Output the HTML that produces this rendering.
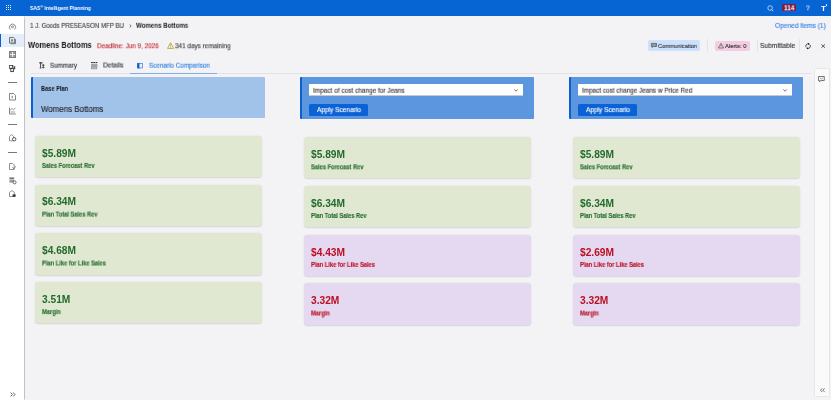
<!DOCTYPE html>
<html><head><meta charset="utf-8"><style>
html,body{margin:0;padding:0;width:831px;height:400px;overflow:hidden;background:#f3f3f6;font-family:"Liberation Sans",sans-serif;}
.r{position:absolute;}
.t{position:absolute;white-space:nowrap;line-height:1;transform-origin:0 0;}
</style></head><body>
<div class="r" style="left:0px;top:0px;width:831px;height:16px;background:#0764d3"></div>
<div class="r" style="left:5.6px;top:4.6px;width:1.2999999999999998px;height:1.2999999999999998px;background:#fff;border-radius:0.3px"></div>
<div class="r" style="left:5.6px;top:6.8999999999999995px;width:1.2999999999999998px;height:1.2999999999999998px;background:#fff;border-radius:0.3px"></div>
<div class="r" style="left:5.6px;top:9.2px;width:1.2999999999999998px;height:1.3000000000000007px;background:#fff;border-radius:0.3px"></div>
<div class="r" style="left:7.8999999999999995px;top:4.6px;width:1.2999999999999998px;height:1.2999999999999998px;background:#fff;border-radius:0.3px"></div>
<div class="r" style="left:7.8999999999999995px;top:6.8999999999999995px;width:1.2999999999999998px;height:1.2999999999999998px;background:#fff;border-radius:0.3px"></div>
<div class="r" style="left:7.8999999999999995px;top:9.2px;width:1.2999999999999998px;height:1.3000000000000007px;background:#fff;border-radius:0.3px"></div>
<div class="r" style="left:10.2px;top:4.6px;width:1.3000000000000007px;height:1.2999999999999998px;background:#fff;border-radius:0.3px"></div>
<div class="r" style="left:10.2px;top:6.8999999999999995px;width:1.3000000000000007px;height:1.2999999999999998px;background:#fff;border-radius:0.3px"></div>
<div class="r" style="left:10.2px;top:9.2px;width:1.3000000000000007px;height:1.3000000000000007px;background:#fff;border-radius:0.3px"></div>
<div class="t" style="left:29.90px;top:6px;font-size:5.94px;color:#fff;font-weight:700;transform:translateY(0.00px) scaleX(0.850);will-change:transform;">SAS<span style="font-size:0.7em;position:relative;top:-0.4em">®</span> Intelligent Planning</div>
<svg class="r" style="left:766.6px;top:4.9px;overflow:visible" width="8" height="8" viewBox="0 0 8 8"><circle cx="3.1" cy="3.0" r="2.3" fill="none" stroke="#e8efff" stroke-width="0.7"/><path d="M4.8 4.7L6.3 6.2" stroke="#e8efff" stroke-width="0.8"/></svg>
<div class="r" style="left:782px;top:4.3px;width:14px;height:7.2px;background:#7e1c46;border-radius:1px"></div>
<div class="t" style="left:783.80px;top:5px;font-size:6.67px;color:#fff;font-weight:700;transform:translateY(0.30px) scaleX(0.967);will-change:transform;">114</div>
<div class="t" style="left:806.00px;top:5px;font-size:6.96px;color:#dde6fa;font-weight:400;transform:translateY(0.40px) scaleX(0.931);will-change:transform;-webkit-text-stroke:0.14px currentColor;">?</div>
<div class="t" style="left:821.00px;top:4px;font-size:7.25px;color:#fff;font-weight:700;transform:translateY(0.60px) scaleX(1.129);will-change:transform;">T</div>
<div class="r" style="left:826.2px;top:4.3px;width:1.2999999999999545px;height:1.2999999999999998px;background:#fff;border-radius:50%"></div>
<div class="r" style="left:0px;top:16px;width:24px;height:384px;background:#fff;box-shadow:0.5px 0 1px rgba(0,0,0,0.2)"></div>
<div class="r" style="left:0px;top:34px;width:24px;height:12.799999999999997px;background:#e3edfb"></div>
<div class="r" style="left:0px;top:34px;width:1.3px;height:12.799999999999997px;background:#0b5fce"></div>
<svg class="r" style="left:9px;top:23px;overflow:visible" width="7" height="7" viewBox="0 0 7 7"><path d="M1.4 6.5A3.1 3.1 0 1 1 5.6 6.5" fill="none" stroke="#666" stroke-width="0.75"/><circle cx="3.5" cy="3.8" r="1" fill="none" stroke="#666" stroke-width="0.75"/></svg>
<svg class="r" style="left:9px;top:36.8px;overflow:visible" width="7" height="7.2" viewBox="0 0 7 7.2"><path d="M0.5 0.5H4.6L5.7 1.6V6H0.5Z" fill="none" stroke="#666" stroke-width="0.9"/><path d="M1.5 6.7H6.5V2.2" fill="none" stroke="#666" stroke-width="0.8"/><rect x="1.9" y="2.2" width="2.2" height="2.4" fill="#888"/></svg>
<svg class="r" style="left:9px;top:50.5px;overflow:visible" width="7" height="7" viewBox="0 0 7 7"><rect x="0.4" y="0.4" width="6.2" height="6.2" fill="none" stroke="#666" stroke-width="0.8"/><rect x="1" y="1" width="2" height="2" fill="#999"/><rect x="4" y="1" width="2" height="2" fill="#999"/><rect x="1" y="4" width="2" height="2" fill="#999"/><rect x="4" y="4" width="2" height="2" fill="#999"/><path d="M3.5 1V6M1 3.5H6" stroke="#eee" stroke-width="1"/></svg>
<svg class="r" style="left:9px;top:64.5px;overflow:visible" width="7" height="7" viewBox="0 0 7 7"><rect x="0.5" y="0.5" width="3.3" height="3" fill="none" stroke="#444" stroke-width="0.8"/><rect x="1.8" y="3.2" width="2.6" height="3.4" fill="none" stroke="#333" stroke-width="0.9"/><path d="M5.7 1.2V4.3" stroke="#222" stroke-width="1"/><path d="M3.8 0.6V2" stroke="#222" stroke-width="0.9"/></svg>
<div class="r" style="left:8px;top:82px;width:9px;height:1px;background:#777"></div>
<svg class="r" style="left:9px;top:92.5px;overflow:visible" width="7" height="7.5" viewBox="0 0 7 7.5"><path d="M0.5 0.5H4.6L6.5 2.4V7H0.5Z" fill="none" stroke="#777" stroke-width="0.9"/><rect x="2.6" y="2.8" width="1.4" height="2.5" fill="#999"/></svg>
<svg class="r" style="left:9px;top:106.5px;overflow:visible" width="7" height="7.5" viewBox="0 0 7 7.5"><path d="M0.5 0.5V7H6.8" fill="none" stroke="#777" stroke-width="0.9"/><path d="M1.2 3L3 1.6L4.6 2.6L6.5 1" fill="none" stroke="#777" stroke-width="0.8"/><rect x="1.5" y="4" width="4.6" height="2.2" fill="#ccc"/></svg>
<div class="r" style="left:8px;top:124px;width:9px;height:1px;background:#777"></div>
<svg class="r" style="left:9px;top:134px;overflow:visible" width="7.5" height="7.5" viewBox="0 0 7.5 7.5"><path d="M0.5 2.4L2.6 0.5L4.6 2.4V6.8H0.5Z" fill="none" stroke="#777" stroke-width="0.8"/><circle cx="5.2" cy="5.2" r="1.7" fill="#fff" stroke="#444" stroke-width="0.9"/></svg>
<div class="r" style="left:8px;top:152px;width:9px;height:1px;background:#777"></div>
<svg class="r" style="left:9px;top:162.5px;overflow:visible" width="7.5" height="7" viewBox="0 0 7.5 7"><path d="M0.5 0.5H3.8L5.2 1.9V6.5H0.5Z" fill="none" stroke="#777" stroke-width="0.8"/><path d="M3.4 4.2L4.8 5.8L6.6 3.4" fill="none" stroke="#666" stroke-width="0.8"/></svg>
<svg class="r" style="left:9px;top:176.5px;overflow:visible" width="7.5" height="7" viewBox="0 0 7.5 7"><rect x="0.4" y="0.4" width="4.8" height="2" fill="#777"/><rect x="0.4" y="3" width="4.8" height="2.6" fill="#999"/><circle cx="5.6" cy="5.4" r="1.5" fill="#fff" stroke="#444" stroke-width="0.8"/></svg>
<svg class="r" style="left:9px;top:190px;overflow:visible" width="7.5" height="7" viewBox="0 0 7.5 7"><path d="M0.5 2.4L3 0.5L5.4 2.4V6.5H0.5Z" fill="none" stroke="#777" stroke-width="0.8"/><rect x="3.6" y="4.4" width="3" height="2.4" fill="#333"/></svg>
<svg class="r" style="left:9.5px;top:391.5px;overflow:visible" width="6" height="5" viewBox="0 0 6 5"><path d="M0.6 0.6L2.4 2.5L0.6 4.4M3.2 0.6L5 2.5L3.2 4.4" fill="none" stroke="#555" stroke-width="0.9"/></svg>
<div class="t" style="left:29.80px;top:22px;font-size:7.10px;color:#45454c;font-weight:400;transform:translateY(0.90px) scaleX(0.861);will-change:transform;-webkit-text-stroke:0.14px currentColor;">1 J. Goods PRESEASON MFP BU</div>
<svg class="r" style="left:129.3px;top:24.3px;overflow:visible" width="3" height="4" viewBox="0 0 3 4"><path d="M0.6 0.5L2.2 1.9L0.6 3.3" fill="none" stroke="#555" stroke-width="0.8"/></svg>
<div class="t" style="left:135.90px;top:22px;font-size:6.96px;color:#18181f;font-weight:700;transform:translateY(0.80px) scaleX(0.886);will-change:transform;">Womens Bottoms</div>
<div class="t" style="left:775.00px;top:22px;font-size:6.96px;color:#3583e3;font-weight:400;transform:translateY(0.90px) scaleX(0.945);will-change:transform;-webkit-text-stroke:0.14px currentColor;">Opened items (1)</div>
<div class="t" style="left:28.20px;top:40px;font-size:8.70px;color:#15151c;font-weight:700;transform:translateY(0.90px) scaleX(0.865);will-change:transform;">Womens Bottoms</div>
<div class="t" style="left:96.90px;top:42px;font-size:7.25px;color:#c42a32;font-weight:400;transform:translateY(0.20px) scaleX(0.875);will-change:transform;-webkit-text-stroke:0.14px currentColor;">Deadline: Jun 9, 2026</div>
<svg class="r" style="left:166.8px;top:42px;overflow:visible" width="7.2" height="7" viewBox="0 0 7.2 7"><path d="M3.6 0.6L6.7 6.4H0.5Z" fill="none" stroke="#b9a637" stroke-width="0.9" stroke-linejoin="round"/><path d="M3.6 2.4V4.6" stroke="#b9a637" stroke-width="0.8"/><circle cx="3.6" cy="5.5" r="0.45" fill="#b9a637"/></svg>
<div class="t" style="left:175.20px;top:42px;font-size:7.25px;color:#3a3a40;font-weight:400;transform:translateY(0.20px) scaleX(0.879);will-change:transform;-webkit-text-stroke:0.14px currentColor;">341 days remaining</div>
<div class="r" style="left:647.8px;top:40.4px;width:52.700000000000045px;height:10.200000000000003px;background:#cce1fb;border-radius:2px"></div>
<svg class="r" style="left:650.8px;top:43px;overflow:visible" width="6" height="4.9" viewBox="0 0 6 4.9"><path d="M0.4 0.4H5.6V3.5H2.4L1.3 4.6V3.5H0.4Z" fill="#888" stroke="#555" stroke-width="0.7" stroke-linejoin="round"/><path d="M1.5 1.6L3 2.5L4.5 1.6" fill="none" stroke="#ddd" stroke-width="0.5"/></svg>
<div class="t" style="left:658.00px;top:43px;font-size:5.80px;color:#33333a;font-weight:400;transform:translateY(0.90px) scaleX(0.968);will-change:transform;-webkit-text-stroke:0.14px currentColor;">Communication</div>
<div class="r" style="left:707px;top:39px;width:0.6000000000000227px;height:13px;background:#e3e3e7"></div>
<div class="r" style="left:715.1px;top:40.5px;width:34.89999999999998px;height:10.200000000000003px;background:#f5cde2;border-radius:2px"></div>
<svg class="r" style="left:718px;top:42.5px;overflow:visible" width="6" height="5.5" viewBox="0 0 6 5.5"><path d="M3 0.4L5.6 5H0.4Z" fill="none" stroke="#555" stroke-width="0.7"/><path d="M3 1.8V3.5" stroke="#555" stroke-width="0.6"/></svg>
<div class="t" style="left:725.30px;top:43px;font-size:5.80px;color:#33333a;font-weight:400;transform:translateY(0.90px) scaleX(1.006);will-change:transform;-webkit-text-stroke:0.14px currentColor;">Alerts: 0</div>
<div class="r" style="left:756.6px;top:39px;width:0.6000000000000227px;height:13px;background:#e3e3e7"></div>
<div class="t" style="left:759.50px;top:42px;font-size:7.10px;color:#33333a;font-weight:400;transform:translateY(0.90px) scaleX(0.939);will-change:transform;-webkit-text-stroke:0.14px currentColor;">Submittable</div>
<div class="r" style="left:799.2px;top:39px;width:0.599999999999909px;height:13px;background:#e3e3e7"></div>
<svg class="r" style="left:804.8px;top:42.5px;overflow:visible" width="6.2" height="6.2" viewBox="0 0 6.2 6.2"><path d="M1.11 4.25A2.3 2.3 0 0 1 3.7 0.88" fill="none" stroke="#333" stroke-width="0.85"/><path d="M5.09 1.95A2.3 2.3 0 0 1 2.5 5.32" fill="none" stroke="#333" stroke-width="0.85"/><circle cx="3.7" cy="0.9" r="0.85" fill="#222"/><circle cx="2.5" cy="5.3" r="0.85" fill="#222"/></svg>
<svg class="r" style="left:820.6px;top:44.3px;overflow:visible" width="4.4" height="4.2" viewBox="0 0 4.4 4.2"><path d="M0.4 0.4L4 3.8M4 0.4L0.4 3.8" stroke="#333" stroke-width="0.8"/></svg>
<div class="r" style="left:31px;top:73px;width:780px;height:0.7000000000000028px;background:#e2e2e6"></div>
<svg class="r" style="left:39px;top:62.2px;overflow:visible" width="5.6" height="6.6" viewBox="0 0 5.6 6.6"><path d="M0.2 0.9H3.6" stroke="#222" stroke-width="1"/><path d="M1.6 0.4V6.2" stroke="#333" stroke-width="0.9"/><path d="M0.6 6H2.4" stroke="#444" stroke-width="0.7"/><path d="M4.3 2V6.4M3.1 3.2H5.5M3.1 5.4H5.5" stroke="#333" stroke-width="0.8"/></svg>
<div class="t" style="left:50.00px;top:62px;font-size:6.81px;color:#33333a;font-weight:400;transform:translateY(0.70px) scaleX(0.927);will-change:transform;-webkit-text-stroke:0.14px currentColor;">Summary</div>
<svg class="r" style="left:90.9px;top:61.7px;overflow:visible" width="6.4" height="7.3" viewBox="0 0 6.4 7.3"><path d="M0 0.5H6.4" stroke="#333" stroke-width="1" stroke-dasharray="1.8 0.5"/><rect x="0" y="1.6" width="6.4" height="4.4" fill="#b4b4b8"/><path d="M0 2.9H6.4M0 4.6H6.4" stroke="#888" stroke-width="0.6"/><path d="M0 6.7H6.4" stroke="#666" stroke-width="0.9" stroke-dasharray="1.6 0.6"/></svg>
<div class="t" style="left:102.70px;top:62px;font-size:6.96px;color:#33333a;font-weight:400;transform:translateY(0.50px) scaleX(0.964);will-change:transform;-webkit-text-stroke:0.14px currentColor;">Details</div>
<svg class="r" style="left:137px;top:62.5px;overflow:visible" width="5.8" height="5.4" viewBox="0 0 5.8 5.4"><rect x="0.4" y="0.4" width="5" height="4.6" fill="none" stroke="#4a8ae0" stroke-width="0.8"/><rect x="0.2" y="0.2" width="2" height="5" fill="#0b5fce"/><path d="M2.6 -0.4V5.8" stroke="#3b7fdc" stroke-width="0.5"/></svg>
<div class="t" style="left:149.00px;top:62px;font-size:6.81px;color:#2f7fe0;font-weight:400;transform:translateY(0.70px) scaleX(0.931);will-change:transform;-webkit-text-stroke:0.14px currentColor;">Scenario Comparison</div>
<div class="r" style="left:130px;top:72.5px;width:87px;height:1.5px;background:#7fb0ec"></div>
<div class="r" style="left:815.2px;top:68.5px;width:14.199999999999932px;height:327.8px;background:#fafafb;box-shadow:0 0 1.2px rgba(0,0,0,0.22)"></div>
<svg class="r" style="left:818.2px;top:76.2px;overflow:visible" width="6.8" height="6.5" viewBox="0 0 6.8 6.5"><path d="M0.5 0.5H6.3V4.5H2.6L1.4 6V4.5H0.5Z" fill="none" stroke="#555" stroke-width="0.8"/><path d="M1.6 1.8L3.3 3.1L5.2 1.8" fill="none" stroke="#777" stroke-width="0.6"/></svg>
<svg class="r" style="left:819.7px;top:388px;overflow:visible" width="5" height="4.4" viewBox="0 0 5 4.4"><path d="M2.2 0.3L0.5 2.2L2.2 4.1M4.6 0.3L2.9 2.2L4.6 4.1" fill="none" stroke="#555" stroke-width="0.8"/></svg>
<div class="r" style="left:31px;top:77.4px;width:234px;height:40.599999999999994px;background:#a2c3e9;border-left:2.4px solid #0b5fce;box-sizing:border-box;border-radius:1px"></div>
<div class="t" style="left:40.80px;top:85px;font-size:6.81px;color:#111118;font-weight:700;transform:translateY(0.90px) scaleX(0.832);will-change:transform;">Base Plan</div>
<div class="t" style="left:40.80px;top:105px;font-size:8.70px;color:#26262c;font-weight:400;transform:translateY(0.00px) scaleX(0.911);will-change:transform;-webkit-text-stroke:0.14px currentColor;">Womens Bottoms</div>
<div class="r" style="left:300px;top:77.4px;width:234px;height:41.3px;background:#5b96de;border-left:2.4px solid #0b5fce;box-sizing:border-box;border-radius:1px"></div>
<div class="r" style="left:309px;top:84.4px;width:214px;height:11.799999999999997px;background:#fff;border-bottom:0.6px solid #c8c8cc;box-sizing:border-box"></div>
<svg class="r" style="left:514px;top:89px;overflow:visible" width="4.2" height="2.8" viewBox="0 0 4.2 2.8"><path d="M0.4 0.4L2.1 2.3L3.8 0.4" fill="none" stroke="#666" stroke-width="0.9"/></svg>
<div class="r" style="left:309.4px;top:103.8px;width:58.60000000000002px;height:11.799999999999997px;background:#0b62d6;border-radius:1.5px"></div>
<div class="t" style="left:317.00px;top:107px;font-size:6.81px;color:#fff;font-weight:400;transform:translateY(0.10px) scaleX(0.960);will-change:transform;-webkit-text-stroke:0.14px currentColor;">Apply Scenario</div>
<div class="r" style="left:569px;top:77.4px;width:234px;height:41.3px;background:#5b96de;border-left:2.4px solid #0b5fce;box-sizing:border-box;border-radius:1px"></div>
<div class="r" style="left:578px;top:84.4px;width:214px;height:11.799999999999997px;background:#fff;border-bottom:0.6px solid #c8c8cc;box-sizing:border-box"></div>
<svg class="r" style="left:783px;top:89px;overflow:visible" width="4.2" height="2.8" viewBox="0 0 4.2 2.8"><path d="M0.4 0.4L2.1 2.3L3.8 0.4" fill="none" stroke="#666" stroke-width="0.9"/></svg>
<div class="r" style="left:578.4px;top:103.8px;width:58.60000000000002px;height:11.799999999999997px;background:#0b62d6;border-radius:1.5px"></div>
<div class="t" style="left:586.00px;top:107px;font-size:6.81px;color:#fff;font-weight:400;transform:translateY(0.10px) scaleX(0.960);will-change:transform;-webkit-text-stroke:0.14px currentColor;">Apply Scenario</div>
<div class="t" style="left:313.00px;top:87px;font-size:7.10px;color:#38383e;font-weight:400;transform:translateY(0.80px) scaleX(0.911);will-change:transform;-webkit-text-stroke:0.14px currentColor;">Impact of cost change for Jeans</div>
<div class="t" style="left:581.70px;top:87px;font-size:7.10px;color:#38383e;font-weight:400;transform:translateY(0.70px) scaleX(0.899);will-change:transform;-webkit-text-stroke:0.14px currentColor;">Impact cost change Jeans w Price Red</div>
<div class="r" style="left:35.2px;top:135.8px;width:226.5px;height:41.30000000000001px;background:#e0e8d2;border-radius:3.5px;box-shadow:0 0.6px 1.6px rgba(0,0,0,0.13)"></div>
<div class="t" style="left:42.10px;top:148px;font-size:10.20px;color:#236b2c;font-weight:700;transform:translateY(0.70px) scaleX(1.000);will-change:transform;">$5.89M</div>
<div class="t" style="left:42.10px;top:162px;font-size:6.30px;color:#236b2c;font-weight:700;transform:translateY(0.90px) scaleX(0.910);will-change:transform;-webkit-text-stroke:0.12px currentColor;">Sales Forecast Rev</div>
<div class="r" style="left:35.2px;top:184.5px;width:226.5px;height:41.30000000000001px;background:#e0e8d2;border-radius:3.5px;box-shadow:0 0.6px 1.6px rgba(0,0,0,0.13)"></div>
<div class="t" style="left:42.10px;top:197px;font-size:10.20px;color:#236b2c;font-weight:700;transform:translateY(0.40px) scaleX(1.000);will-change:transform;">$6.34M</div>
<div class="t" style="left:42.10px;top:211px;font-size:6.30px;color:#236b2c;font-weight:700;transform:translateY(0.60px) scaleX(0.910);will-change:transform;-webkit-text-stroke:0.12px currentColor;">Plan Total Sales Rev</div>
<div class="r" style="left:35.2px;top:233.4px;width:226.5px;height:41.29999999999998px;background:#e0e8d2;border-radius:3.5px;box-shadow:0 0.6px 1.6px rgba(0,0,0,0.13)"></div>
<div class="t" style="left:42.10px;top:246px;font-size:10.20px;color:#236b2c;font-weight:700;transform:translateY(0.30px) scaleX(1.000);will-change:transform;">$4.68M</div>
<div class="t" style="left:42.10px;top:260px;font-size:6.30px;color:#236b2c;font-weight:700;transform:translateY(0.50px) scaleX(0.910);will-change:transform;-webkit-text-stroke:0.12px currentColor;">Plan Like for Like Sales</div>
<div class="r" style="left:35.2px;top:282.0px;width:226.5px;height:41.30000000000001px;background:#e0e8d2;border-radius:3.5px;box-shadow:0 0.6px 1.6px rgba(0,0,0,0.13)"></div>
<div class="t" style="left:42.10px;top:294px;font-size:10.20px;color:#236b2c;font-weight:700;transform:translateY(0.90px) scaleX(1.000);will-change:transform;">3.51M</div>
<div class="t" style="left:42.10px;top:309px;font-size:6.30px;color:#236b2c;font-weight:700;transform:translateY(0.10px) scaleX(0.910);will-change:transform;-webkit-text-stroke:0.12px currentColor;">Margin</div>
<div class="r" style="left:304.3px;top:137.20000000000002px;width:226.49999999999994px;height:41.29999999999998px;background:#e0e8d2;border-radius:3.5px;box-shadow:0 0.6px 1.6px rgba(0,0,0,0.13)"></div>
<div class="t" style="left:311.20px;top:150px;font-size:10.20px;color:#236b2c;font-weight:700;transform:translateY(0.10px) scaleX(1.000);will-change:transform;">$5.89M</div>
<div class="t" style="left:311.20px;top:164px;font-size:6.30px;color:#236b2c;font-weight:700;transform:translateY(0.30px) scaleX(0.910);will-change:transform;-webkit-text-stroke:0.12px currentColor;">Sales Forecast Rev</div>
<div class="r" style="left:304.3px;top:185.9px;width:226.49999999999994px;height:41.29999999999998px;background:#e0e8d2;border-radius:3.5px;box-shadow:0 0.6px 1.6px rgba(0,0,0,0.13)"></div>
<div class="t" style="left:311.20px;top:198px;font-size:10.20px;color:#236b2c;font-weight:700;transform:translateY(0.80px) scaleX(1.000);will-change:transform;">$6.34M</div>
<div class="t" style="left:311.20px;top:213px;font-size:6.30px;color:#236b2c;font-weight:700;transform:translateY(0.00px) scaleX(0.910);will-change:transform;-webkit-text-stroke:0.12px currentColor;">Plan Total Sales Rev</div>
<div class="r" style="left:304.3px;top:234.8px;width:226.49999999999994px;height:41.30000000000001px;background:#e4d9f1;border-radius:3.5px;box-shadow:0 0.6px 1.6px rgba(0,0,0,0.13)"></div>
<div class="t" style="left:311.20px;top:247px;font-size:10.20px;color:#bb0f22;font-weight:700;transform:translateY(0.70px) scaleX(1.000);will-change:transform;">$4.43M</div>
<div class="t" style="left:311.20px;top:261px;font-size:6.30px;color:#bb0f22;font-weight:700;transform:translateY(0.90px) scaleX(0.910);will-change:transform;-webkit-text-stroke:0.12px currentColor;">Plan Like for Like Sales</div>
<div class="r" style="left:304.3px;top:283.4px;width:226.49999999999994px;height:41.30000000000001px;background:#e4d9f1;border-radius:3.5px;box-shadow:0 0.6px 1.6px rgba(0,0,0,0.13)"></div>
<div class="t" style="left:311.20px;top:296px;font-size:10.20px;color:#bb0f22;font-weight:700;transform:translateY(0.30px) scaleX(1.000);will-change:transform;">3.32M</div>
<div class="t" style="left:311.20px;top:310px;font-size:6.30px;color:#bb0f22;font-weight:700;transform:translateY(0.50px) scaleX(0.910);will-change:transform;-webkit-text-stroke:0.12px currentColor;">Margin</div>
<div class="r" style="left:573.1px;top:137.20000000000002px;width:226.5px;height:41.29999999999998px;background:#e0e8d2;border-radius:3.5px;box-shadow:0 0.6px 1.6px rgba(0,0,0,0.13)"></div>
<div class="t" style="left:580.00px;top:150px;font-size:10.20px;color:#236b2c;font-weight:700;transform:translateY(0.10px) scaleX(1.000);will-change:transform;">$5.89M</div>
<div class="t" style="left:580.00px;top:164px;font-size:6.30px;color:#236b2c;font-weight:700;transform:translateY(0.30px) scaleX(0.910);will-change:transform;-webkit-text-stroke:0.12px currentColor;">Sales Forecast Rev</div>
<div class="r" style="left:573.1px;top:185.9px;width:226.5px;height:41.29999999999998px;background:#e0e8d2;border-radius:3.5px;box-shadow:0 0.6px 1.6px rgba(0,0,0,0.13)"></div>
<div class="t" style="left:580.00px;top:198px;font-size:10.20px;color:#236b2c;font-weight:700;transform:translateY(0.80px) scaleX(1.000);will-change:transform;">$6.34M</div>
<div class="t" style="left:580.00px;top:213px;font-size:6.30px;color:#236b2c;font-weight:700;transform:translateY(0.00px) scaleX(0.910);will-change:transform;-webkit-text-stroke:0.12px currentColor;">Plan Total Sales Rev</div>
<div class="r" style="left:573.1px;top:234.8px;width:226.5px;height:41.30000000000001px;background:#e4d9f1;border-radius:3.5px;box-shadow:0 0.6px 1.6px rgba(0,0,0,0.13)"></div>
<div class="t" style="left:580.00px;top:247px;font-size:10.20px;color:#bb0f22;font-weight:700;transform:translateY(0.70px) scaleX(1.000);will-change:transform;">$2.69M</div>
<div class="t" style="left:580.00px;top:261px;font-size:6.30px;color:#bb0f22;font-weight:700;transform:translateY(0.90px) scaleX(0.910);will-change:transform;-webkit-text-stroke:0.12px currentColor;">Plan Like for Like Sales</div>
<div class="r" style="left:573.1px;top:283.4px;width:226.5px;height:41.30000000000001px;background:#e4d9f1;border-radius:3.5px;box-shadow:0 0.6px 1.6px rgba(0,0,0,0.13)"></div>
<div class="t" style="left:580.00px;top:296px;font-size:10.20px;color:#bb0f22;font-weight:700;transform:translateY(0.30px) scaleX(1.000);will-change:transform;">3.32M</div>
<div class="t" style="left:580.00px;top:310px;font-size:6.30px;color:#bb0f22;font-weight:700;transform:translateY(0.50px) scaleX(0.910);will-change:transform;-webkit-text-stroke:0.12px currentColor;">Margin</div>
</body></html>
